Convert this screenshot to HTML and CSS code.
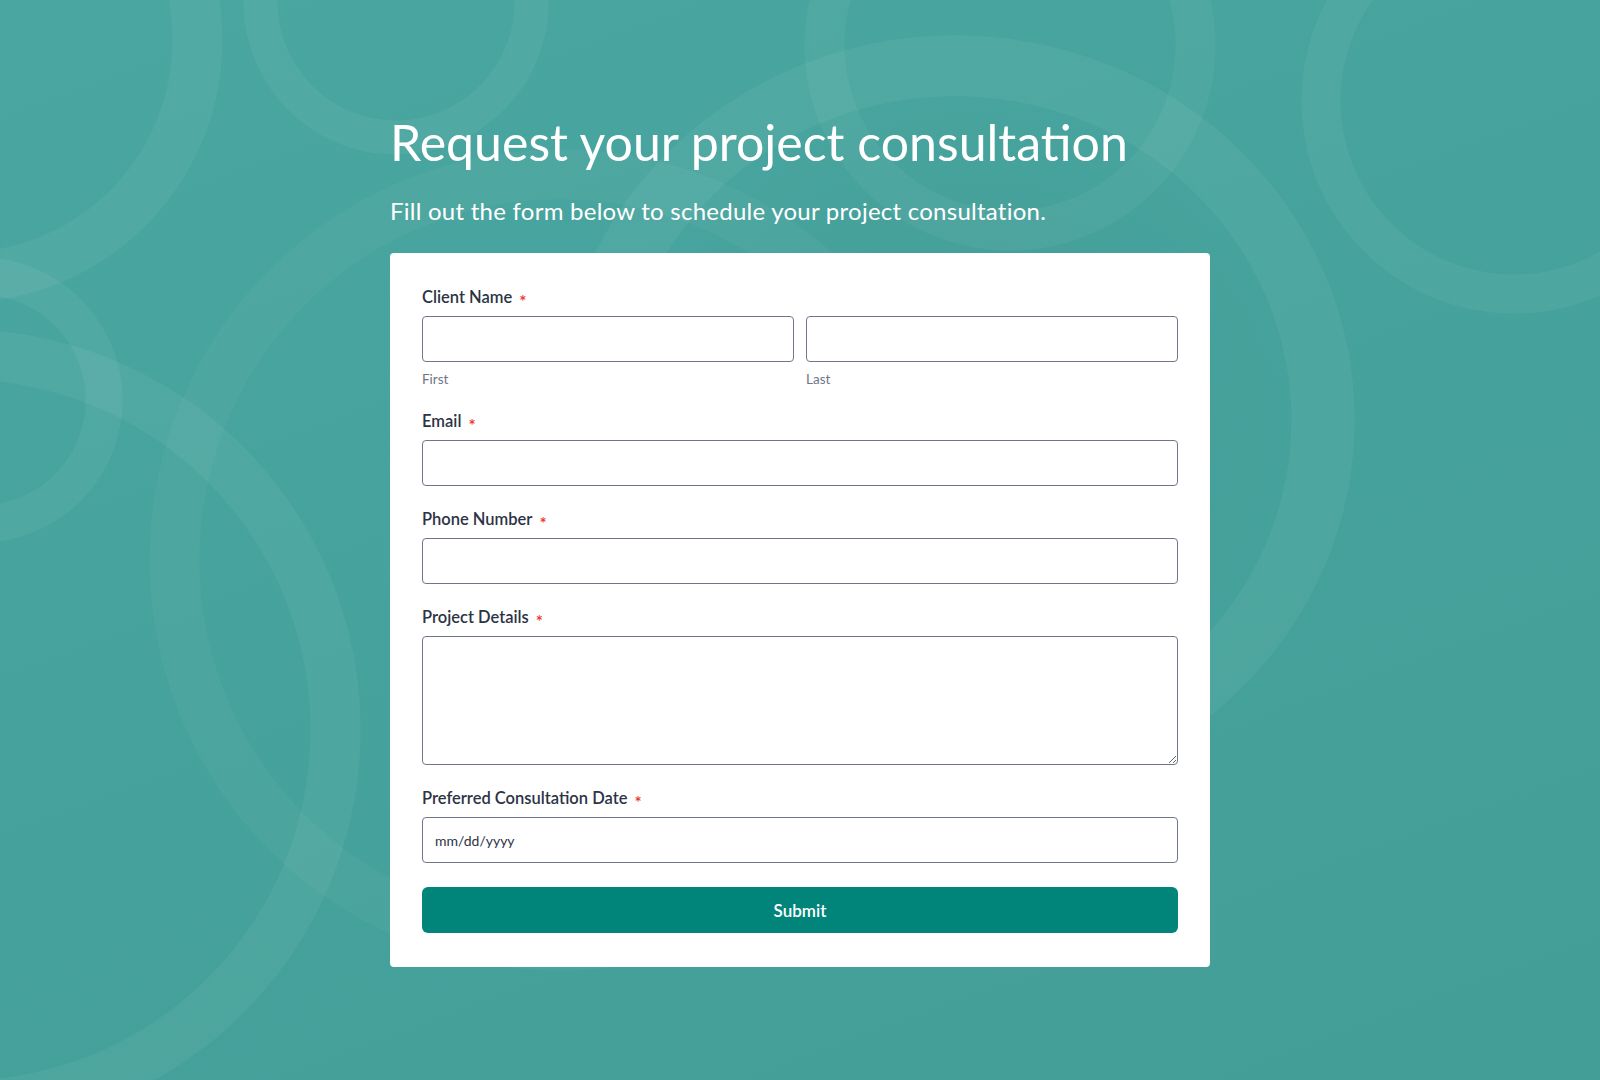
FILE: index.html
```html
<!DOCTYPE html>
<html lang="en">
<head>
<meta charset="utf-8">
<title>Request your project consultation</title>
<link rel="stylesheet" href="styles.css">
</head>
<body>
<main class="page">
  <h1 class="title">Request your project consultation</h1>
  <p class="subtitle">Fill out the form below to schedule your project consultation.</p>
  <form class="card">
    <div class="field field-name">
      <label class="label">Client Name<span class="req">*</span></label>
      <div class="name-row">
        <div class="name-col">
          <input class="input" type="text">
          <span class="sublabel">First</span>
        </div>
        <div class="name-col">
          <input class="input" type="text">
          <span class="sublabel">Last</span>
        </div>
      </div>
    </div>
    <div class="field">
      <label class="label">Email<span class="req">*</span></label>
      <input class="input" type="email">
    </div>
    <div class="field">
      <label class="label">Phone Number<span class="req">*</span></label>
      <input class="input" type="tel">
    </div>
    <div class="field field-text">
      <label class="label">Project Details<span class="req">*</span></label>
      <textarea class="textarea"></textarea>
    </div>
    <div class="field field-last">
      <label class="label">Preferred Consultation Date<span class="req">*</span></label>
      <input class="input date" type="text" placeholder="mm/dd/yyyy">
    </div>
    <button class="submit" type="button">Submit</button>
  </form>
</main>
</body>
</html>
```
FILE: styles.css
```css
* { box-sizing: border-box; }
html, body { margin: 0; padding: 0; }
body {
  min-height: 1080px;
  font-family: Lato, "Noto Sans", sans-serif;
  background-color: #46a29c;
  background-image:
    radial-gradient(circle at 1514px 101px, transparent 173px, rgba(255,255,255,0.05) 174px, rgba(255,255,255,0.05) 212px, transparent 213px),
    radial-gradient(circle at 1010px 45px, transparent 165px, rgba(255,255,255,0.045) 166px, rgba(255,255,255,0.045) 205px, transparent 206px),
    radial-gradient(circle at 396px 2px, transparent 118px, rgba(255,255,255,0.05) 119px, rgba(255,255,255,0.05) 152px, transparent 153px),
    radial-gradient(circle at -40px 40px, transparent 212px, rgba(255,255,255,0.05) 213px, rgba(255,255,255,0.05) 262px, transparent 263px),
    radial-gradient(circle at -20px 400px, transparent 105px, rgba(255,255,255,0.05) 106px, rgba(255,255,255,0.05) 142px, transparent 143px),
    radial-gradient(circle at -40px 730px, transparent 350px, rgba(255,255,255,0.05) 351px, rgba(255,255,255,0.05) 400px, transparent 401px),
    radial-gradient(circle at 560px 560px, transparent 360px, rgba(255,255,255,0.03) 361px, rgba(255,255,255,0.03) 410px, transparent 411px),
    radial-gradient(ellipse 400px 385px at 955px 420px, transparent 84%, rgba(255,255,255,0.05) 84.2%, rgba(255,255,255,0.05) 99.8%, transparent 100%),
    radial-gradient(ellipse 330px 330px at 960px 420px, rgba(0,60,55,0.05), transparent 100%),
    linear-gradient(160deg, #4aa6a0 0%, #46a29c 45%, #429e97 100%);
  background-repeat: no-repeat;
}
.page {
  width: 820px;
  margin: 0 auto;
  padding: 112px 0 112px;
}
.title {
  margin: 0;
  font-size: 50px;
  line-height: 60px;
  font-weight: 400;
  color: #ffffff;
}
.subtitle {
  margin: 24px 0 27px;
  font-size: 24px;
  line-height: 30px;
  font-weight: 400;
  letter-spacing: 0.25px;
  color: #ffffff;
}
.card {
  background: #ffffff;
  border-radius: 4px;
  padding: 32px 32px 34px;
}
.field { margin-bottom: 21px; }
.field-name { margin-bottom: 22px; }
.field-text { margin-bottom: 21px; }
.field-last { margin-bottom: 24px; }
.label {
  display: block;
  height: 23px;
  font-size: 16.5px;
  line-height: 20px;
  font-weight: 600;
  color: #2c3345;
  padding-top: 2px;
  margin-bottom: 8px;
}
.req {
  color: #ee3b2e;
  font-size: 17px;
  line-height: 0;
  font-weight: 600;
  margin-left: 7px;
  vertical-align: -5px;
}
.name-row {
  display: grid;
  grid-template-columns: 1fr 1fr;
  gap: 12px;
}
.name-col { display: flex; flex-direction: column; }
.input, .textarea {
  display: block;
  width: 100%;
  height: 46px;
  border: 1px solid #6f7687;
  border-radius: 4px;
  background: #ffffff;
  font-family: Lato, "Noto Sans", sans-serif;
  font-size: 14px;
  color: #2c3345;
  padding: 0 12px;
  outline: none;
}
.textarea {
  height: 129px;
  padding: 10px 12px;
  resize: vertical;
}
.date::placeholder { color: #2c3345; opacity: 1; }
.sublabel {
  margin-top: 9px;
  font-size: 13.5px;
  line-height: 16px;
  color: #6f7687;
}
.submit {
  display: block;
  width: 100%;
  height: 46px;
  border: 0;
  border-radius: 6px;
  background: #01857b;
  color: #ffffff;
  font-family: Lato, "Noto Sans", sans-serif;
  font-size: 17px;
  font-weight: 600;
  cursor: pointer;
}
```
